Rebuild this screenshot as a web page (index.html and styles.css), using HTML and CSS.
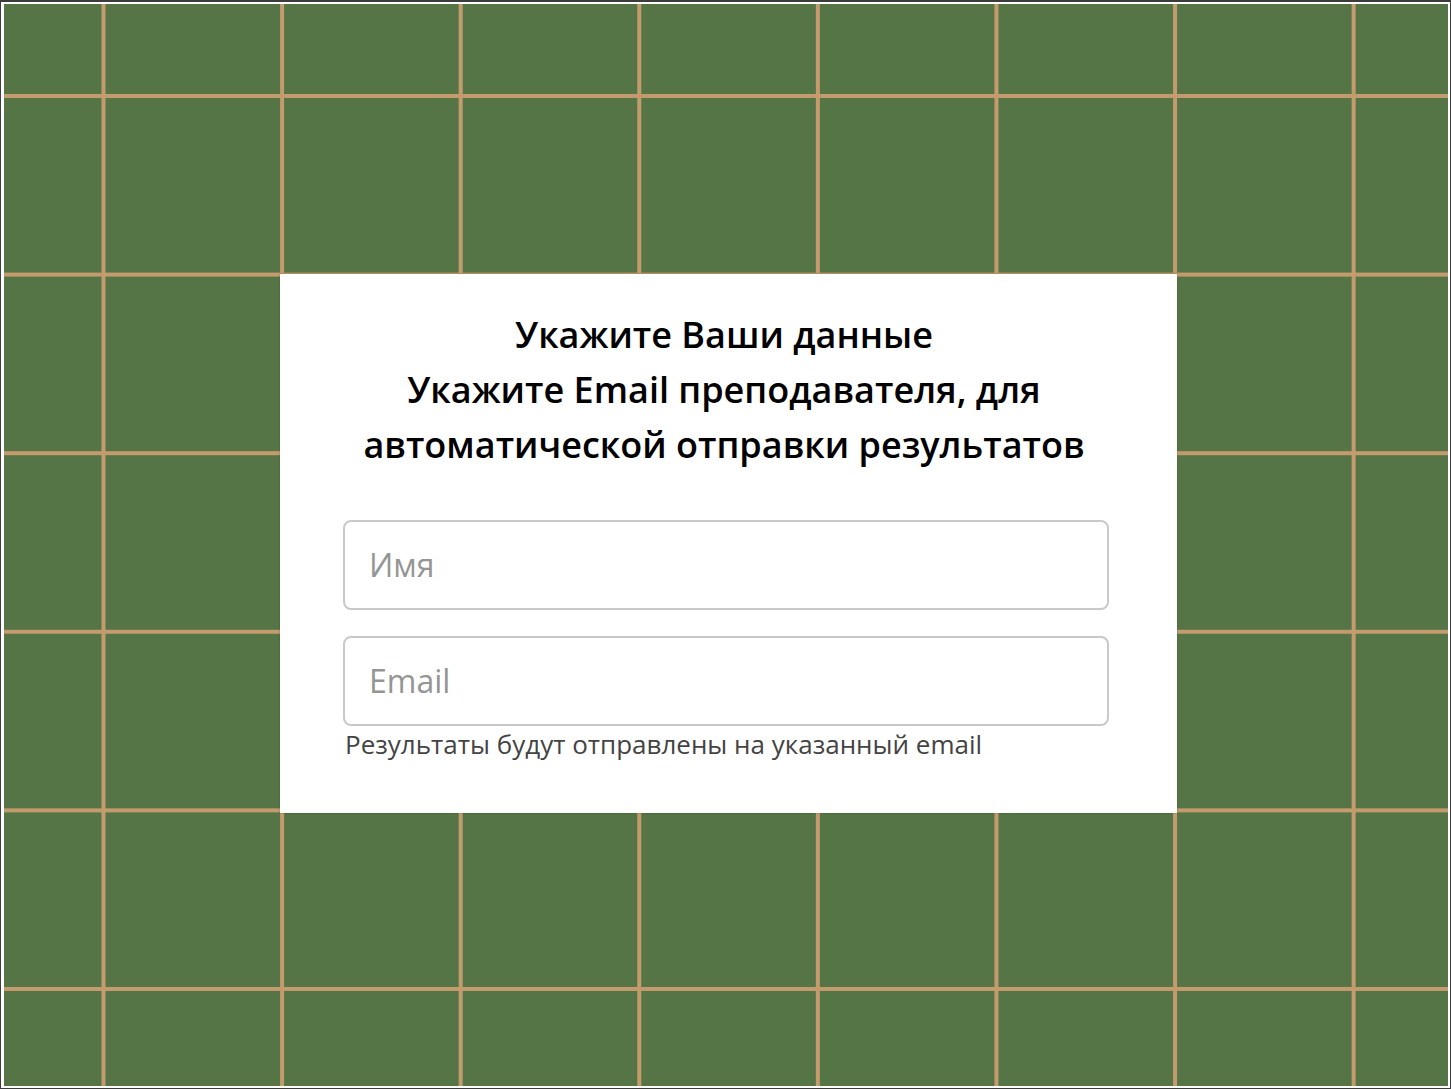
FILE: index.html
```html
<!DOCTYPE html>
<html lang="ru">
<head>
  <meta charset="UTF-8" />
  <meta name="viewport" content="width=device-width, initial-scale=1.0" />
  <title>Ваши данные</title>
  <link rel="stylesheet" href="styles.css">
</head>
<body>
  <div class="screen">
    <div class="board">
      <div class="card">
        <h2>Укажите Ваши данные<br>Укажите Email преподавателя, для автоматической отправки результатов</h2>
        <form id="infoForm">
          <input type="text" class="field" placeholder="Имя" />
          <input type="email" class="field" placeholder="Email" />
          <div class="hint">Результаты будут отправлены на указанный email</div>
        </form>
      </div>
    </div>
  </div>
</body>
</html>
```

FILE: styles.css
```css
html, body {
  margin: 0;
  height: 100%;
}

body {
  font-family: 'Open Sans', 'Noto Sans', sans-serif;
}

.screen {
  height: 100vh;
  box-sizing: border-box;
  border: 1px solid #3c3c3c;
  border-top-width: 2px;
  background: #fff;
  padding: 2px 2px 2px 3px;
}

.board {
  height: 100%;
  box-sizing: border-box;
  display: flex;
  justify-content: center;
  align-items: center;
  padding: 0 0 4px 5px;
  background-color: #557547;
  background-image:
    linear-gradient(to right, #c39b6c 4px, transparent 4px),
    linear-gradient(to bottom, #c39b6c 4px, transparent 4px);
  background-size: 178.6px 178.6px;
  background-position: 97.5px 90px;
}

.card {
  width: 897px;
  box-sizing: border-box;
  background: #fff;
  padding: 33px 68px 50px 63px;
  box-shadow: 0 0 2px rgba(0, 0, 0, 0.25);
}

.card h2 {
  margin: 0 4px 48px 0;
  font-size: 36px;
  font-weight: 600;
  line-height: 55px;
  text-align: center;
  color: #000;
}

.field {
  display: block;
  width: 100%;
  height: 90px;
  box-sizing: border-box;
  border: 2px solid #c9c9c9;
  border-radius: 8px;
  padding: 0 24px;
  margin-bottom: 26px;
  font-family: inherit;
  font-size: 32px;
  color: #333;
  outline: none;
}

.field:last-of-type {
  margin-bottom: 0;
}

.field::placeholder {
  color: #959595;
}

.hint {
  margin-left: 2px;
  font-size: 26px;
  line-height: 37px;
  color: #444;
}
```
